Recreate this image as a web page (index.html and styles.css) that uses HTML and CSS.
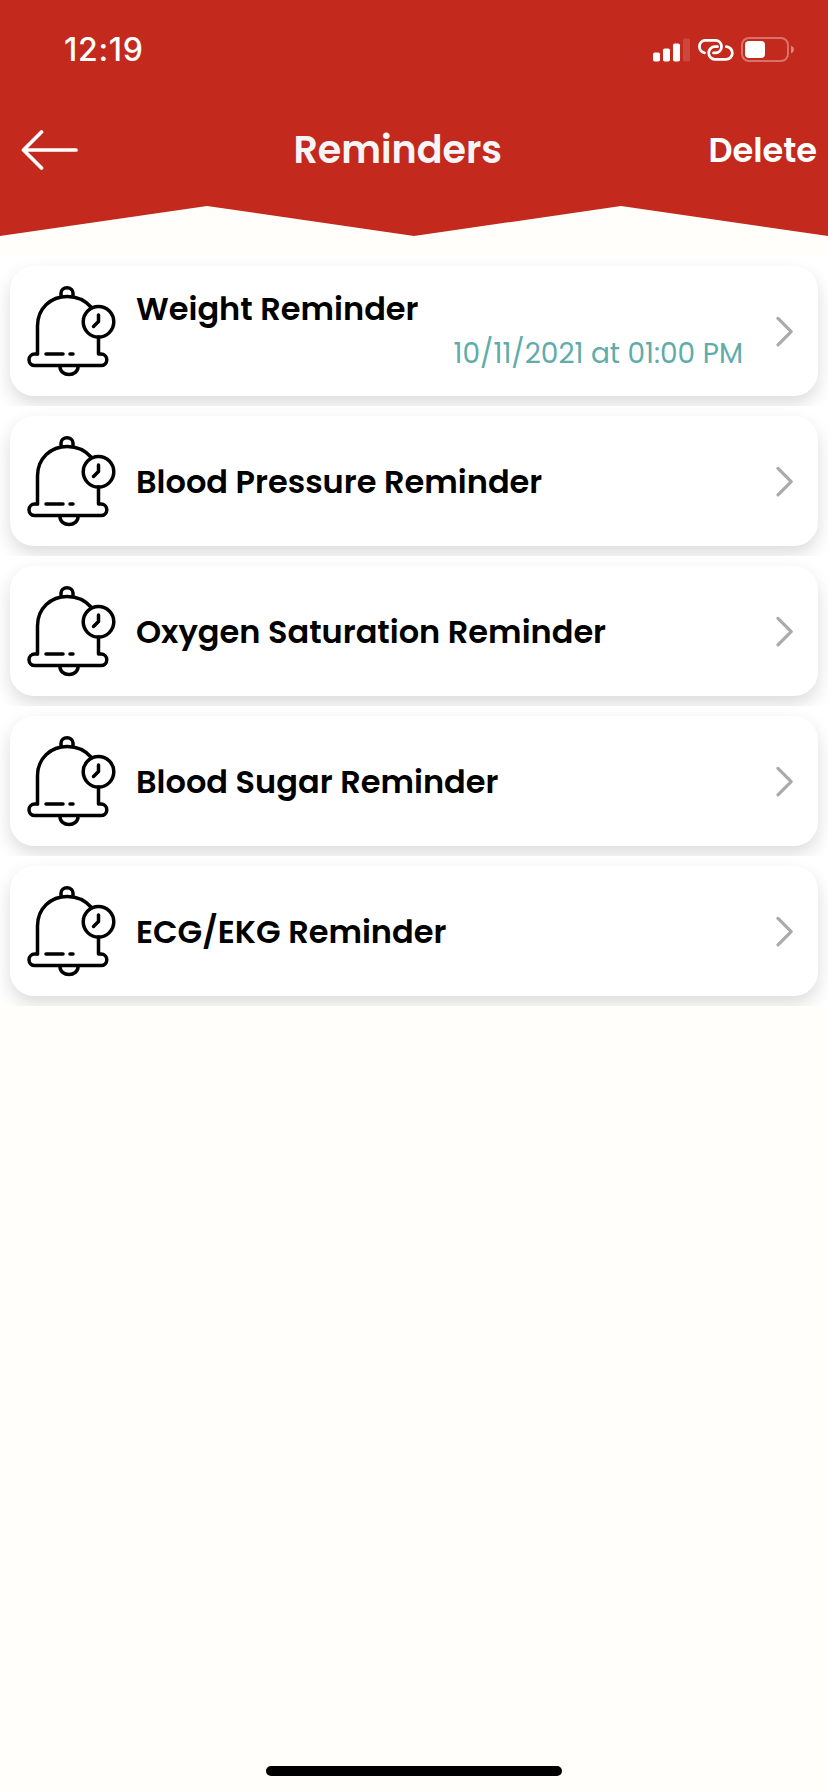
FILE: index.html
```html
<!DOCTYPE html>
<html lang="en">
<head>
    <meta charset="UTF-8">
    <meta name="viewport" content="width=device-width, initial-scale=1.0">
    <title>Reminders</title>
    <link rel="stylesheet" href="styles.css">
</head>
<body>
    <!-- Shared icons -->
    <svg class="sprite" aria-hidden="true">
        <symbol id="bell" viewBox="27 285 90 92">
            <g fill="none" stroke="#000" stroke-width="3.5" stroke-linecap="round" stroke-linejoin="round">
                <path d="M61 295v-2a6 5.3 0 0 1 12 0v2"/>
                <path d="M37.500 354V326C37.500 308 51 296.500 67.300 296.500C77 296.500 85 300 91.500 307.500"/>
                <path d="M37.500 354H34.800a5.800 5.800 0 0 0 0 11.600H101a5.800 5.800 0 0 0 0-11.600H98.500V337"/>
                <path d="M46 354H63M70 354H73"/>
                <path d="M60 367a9 7.500 0 0 0 18 0"/>
                <circle cx="98.500" cy="321.800" r="15.300"/>
                <path d="M98.500 315v6.500l-5 5"/>
            </g>
        </symbol>
        <symbol id="chevron" viewBox="0 0 18 32">
            <path d="M2 3.400L15.200 16.600L2 29.800" fill="none" stroke="#aaa" stroke-width="3.200" stroke-linecap="round" stroke-linejoin="round"/>
        </symbol>
    </svg>

    <header class="header">
        <div class="status-bar">
            <span class="time">12:19</span>
            <div class="status-icons">
                <svg width="37" height="24" viewBox="0 0 37 24" fill="#fff">
                    <rect x="0" y="14.500" width="7" height="9" rx="1.800"/>
                    <rect x="10" y="10.500" width="7" height="13" rx="1.800"/>
                    <rect x="20" y="5.500" width="7" height="18" rx="1.800"/>
                    <rect x="30" y="0.500" width="7" height="23" rx="1.800" opacity=".15"/>
                </svg>
                <svg width="37" height="22" viewBox="0 0 37 22" fill="none" stroke="#fff" stroke-width="2.800" stroke-linecap="round">
                    <path d="M7.500 13.800A6.300 6.300 0 0 1 7.700 1.400H19A6.300 6.300 0 0 1 19 13.900H16.500"/>
                    <path d="M20.500 7.700H18A6.300 6.300 0 0 0 18 20.300H28.800A6.300 6.300 0 0 0 29.300 7.700"/>
                </svg>
                <svg width="54" height="26" viewBox="0 0 54 26">
                    <rect x="1" y="1" width="46" height="23" rx="7" fill="none" stroke="#fff" stroke-width="2" opacity=".35"/>
                    <rect x="4" y="4" width="20" height="17" rx="4" fill="#fff"/>
                    <path d="M50 8.500q3 1.500 3 4t-3 4z" fill="#fff" opacity=".45"/>
                </svg>
            </div>
        </div>
        <nav class="nav-bar">
            <a class="back" href="#" aria-label="Back">
                <svg width="58" height="42" viewBox="0 0 58 42" fill="none" stroke="#fff" stroke-width="3.700" stroke-linecap="round" stroke-linejoin="round">
                    <path d="M55 21H2.500M20.500 3L2.500 21L20.500 39"/>
                </svg>
            </a>
            <h1 class="title">Reminders</h1>
            <a class="delete" href="#">Delete</a>
        </nav>
    </header>

    <main class="list">
        <div class="row">
            <div class="card">
                <svg class="bell"><use href="#bell"/></svg>
                <div class="info scheduled">
                    <p class="name">Weight Reminder</p>
                    <p class="date">10/11/2021 at 01:00 PM</p>
                </div>
                <svg class="chevron"><use href="#chevron"/></svg>
            </div>
        </div>
        <div class="row">
            <div class="card">
                <svg class="bell"><use href="#bell"/></svg>
                <div class="info"><p class="name">Blood Pressure Reminder</p></div>
                <svg class="chevron"><use href="#chevron"/></svg>
            </div>
        </div>
        <div class="row">
            <div class="card">
                <svg class="bell"><use href="#bell"/></svg>
                <div class="info"><p class="name">Oxygen Saturation Reminder</p></div>
                <svg class="chevron"><use href="#chevron"/></svg>
            </div>
        </div>
        <div class="row">
            <div class="card">
                <svg class="bell"><use href="#bell"/></svg>
                <div class="info"><p class="name">Blood Sugar Reminder</p></div>
                <svg class="chevron"><use href="#chevron"/></svg>
            </div>
        </div>
        <div class="row">
            <div class="card">
                <svg class="bell"><use href="#bell"/></svg>
                <div class="info"><p class="name">ECG/EKG Reminder</p></div>
                <svg class="chevron"><use href="#chevron"/></svg>
            </div>
        </div>
    </main>

    <div class="home-bar"></div>
</body>
</html>
```
FILE: styles.css
```css
* {
    box-sizing: border-box;
}

body {
    margin: 0;
    height: 1792px;
    display: flex;
    flex-direction: column;
    background: #fffefa;
    font-family: Poppins, Inter, sans-serif;
    color: #000;
    overflow: hidden;
}

h1, p {
    margin: 0;
}

a {
    color: #fff;
    text-decoration: none;
}

svg {
    display: block;
    flex-shrink: 0;
}

.sprite {
    position: absolute;
    width: 0;
    height: 0;
}

/* Red header with zigzag bottom edge */
.header {
    height: 236px;
    flex-shrink: 0;
    background: #c3291c;
    color: #fff;
    clip-path: polygon(0 0, 100% 0, 100% 100%, 75% 206px, 50% 100%, 25% 206px, 0 100%);
}

.status-bar {
    height: 99px;
    padding: 0 33px 0 64px;
    display: flex;
    justify-content: space-between;
    align-items: center;
}

.time {
    font-family: Inter, sans-serif;
    font-size: 32px;
    font-weight: 500;
    letter-spacing: 0.7px;
}

.status-icons {
    display: flex;
    align-items: center;
    gap: 7px;
}

.nav-bar {
    height: 102px;
    padding: 0 11px 0 21px;
    display: flex;
    justify-content: space-between;
    align-items: center;
}

.back {
    padding-right: 8px;
}

.title {
    padding-bottom: 2px;
    font-size: 38px;
    font-weight: 600;
    color: #f5f5f7;
}

.delete {
    padding-top: 2px;
    font-size: 33.6px;
    font-weight: 600;
}

/* Reminder list */
.list {
    margin-top: 20px;
}

.row {
    height: 150px;
    padding: 10px;
    background: #fff;
    overflow: hidden;
}

.card {
    height: 130px;
    padding: 0 24px 0 17px;
    display: flex;
    align-items: center;
    background: #fff;
    border-radius: 24px;
    box-shadow: 0 8px 18px rgba(0, 0, 0, 0.14);
}

.bell {
    width: 90px;
    height: 92px;
}

.info {
    flex: 1;
    padding: 2px 33px 0 19px;
}

.scheduled {
    padding-top: 1px;
}

.name {
    font-size: 32px;
    line-height: 44px;
    font-weight: 600;
    white-space: nowrap;
}

.date {
    font-size: 28px;
    line-height: 45px;
    text-align: right;
    color: #5eada9;
}

.chevron {
    width: 18px;
    height: 32px;
}

.home-bar {
    width: 296px;
    height: 10px;
    margin: auto auto 16px;
    border-radius: 5px;
    background: #000;
}
```
